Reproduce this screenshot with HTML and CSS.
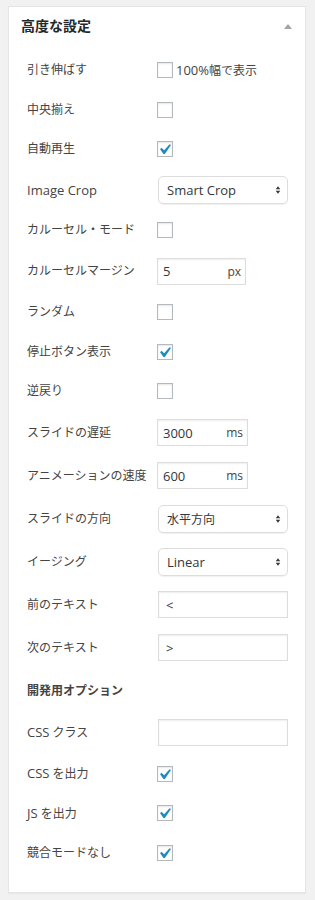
FILE: index.html
```html
<!DOCTYPE html>
<html>
<head>
    <meta charset="utf-8">
    <title>高度な設定</title>
    <link rel="stylesheet" href="styles.css">
</head>
<body>
    <div class="postbox">
        <div class="postbox-header">
            <h2>高度な設定</h2>
            <span class="toggle"></span>
        </div>

        <div class="inside">
            <div class="row">
                <label>引き伸ばす</label>
                <div class="control">
                    <span class="checkbox"></span>
                    <span class="note"><span class="latin">100%</span>幅で表示</span>
                </div>
            </div>
            <div class="row">
                <label>中央揃え</label>
                <div class="control"><span class="checkbox"></span></div>
            </div>
            <div class="row">
                <label>自動再生</label>
                <div class="control">
                    <span class="checkbox checked">
                        <svg viewBox="0 0 20 20"><path d="M14.83 4.89l1.34.94-5.81 8.38H9.02L5.78 9.67l1.34-1.250 2.57 2.4z" /></svg>
                    </span>
                </div>
            </div>
            <div class="row row-select">
                <label class="latin">Image Crop</label>
                <div class="control">
                    <div class="select">
                        <span>Smart Crop</span>
                        <svg viewBox="0 0 8 12"><path d="M4 1 L7 5 L1 5 Z M4 11 L7 7 L1 7 Z" /></svg>
                    </div>
                </div>
            </div>
            <div class="row">
                <label>カルーセル・モード</label>
                <div class="control"><span class="checkbox"></span></div>
            </div>
            <div class="row row-field">
                <label>カルーセルマージン</label>
                <div class="control">
                    <div class="input input-unit"><span>5</span><span class="unit">px</span></div>
                </div>
            </div>
            <div class="row">
                <label>ランダム</label>
                <div class="control"><span class="checkbox"></span></div>
            </div>
            <div class="row">
                <label>停止ボタン表示</label>
                <div class="control">
                    <span class="checkbox checked">
                        <svg viewBox="0 0 20 20"><path d="M14.83 4.89l1.34.94-5.81 8.38H9.02L5.78 9.67l1.34-1.250 2.57 2.4z" /></svg>
                    </span>
                </div>
            </div>
            <div class="row">
                <label>逆戻り</label>
                <div class="control"><span class="checkbox"></span></div>
            </div>
            <div class="row row-field">
                <label>スライドの遅延</label>
                <div class="control">
                    <div class="input input-unit wide"><span>3000</span><span class="unit">ms</span></div>
                </div>
            </div>
            <div class="row row-field">
                <label>アニメーションの速度</label>
                <div class="control">
                    <div class="input input-unit wide"><span>600</span><span class="unit">ms</span></div>
                </div>
            </div>
            <div class="row row-field">
                <label>スライドの方向</label>
                <div class="control">
                    <div class="select">
                        <span class="cjk">水平方向</span>
                        <svg viewBox="0 0 8 12"><path d="M4 1 L7 5 L1 5 Z M4 11 L7 7 L1 7 Z" /></svg>
                    </div>
                </div>
            </div>
            <div class="row row-field">
                <label>イージング</label>
                <div class="control">
                    <div class="select">
                        <span>Linear</span>
                        <svg viewBox="0 0 8 12"><path d="M4 1 L7 5 L1 5 Z M4 11 L7 7 L1 7 Z" /></svg>
                    </div>
                </div>
            </div>
            <div class="row row-field">
                <label>前のテキスト</label>
                <div class="control"><div class="input full">&lt;</div></div>
            </div>
            <div class="row row-field">
                <label>次のテキスト</label>
                <div class="control"><div class="input full">&gt;</div></div>
            </div>
            <div class="row row-heading">
                <h3>開発用オプション</h3>
            </div>
            <div class="row row-field">
                <label><span class="latin">CSS</span> クラス</label>
                <div class="control"><div class="input full"></div></div>
            </div>
            <div class="row">
                <label><span class="latin">CSS</span> を出力</label>
                <div class="control">
                    <span class="checkbox checked">
                        <svg viewBox="0 0 20 20"><path d="M14.83 4.89l1.34.94-5.81 8.38H9.02L5.78 9.67l1.34-1.250 2.57 2.4z" /></svg>
                    </span>
                </div>
            </div>
            <div class="row">
                <label><span class="latin">JS</span> を出力</label>
                <div class="control">
                    <span class="checkbox checked">
                        <svg viewBox="0 0 20 20"><path d="M14.83 4.89l1.34.94-5.81 8.38H9.02L5.78 9.67l1.34-1.250 2.57 2.4z" /></svg>
                    </span>
                </div>
            </div>
            <div class="row">
                <label>競合モードなし</label>
                <div class="control">
                    <span class="checkbox checked">
                        <svg viewBox="0 0 20 20"><path d="M14.83 4.89l1.34.94-5.81 8.38H9.02L5.78 9.67l1.34-1.250 2.57 2.4z" /></svg>
                    </span>
                </div>
            </div>
        </div>
    </div>
</body>
</html>
```

FILE: styles.css
```css
body {
    margin: 0;
    padding: 6px 9px 8px 8px;
    background: #f1f1f1;
    font-family: "Open Sans", "Noto Sans CJK JP", sans-serif;
    font-size: 12px;
    color: #444;
}
.latin {
    font-size: 13px;
}
.postbox {
    background: #fff;
    border: 1px solid #e5e5e5;
    box-shadow: 0 1px 1px rgba(0, 0, 0, 0.04);
}
.postbox-header {
    display: flex;
    align-items: center;
    justify-content: space-between;
    height: 37px;
    padding: 0 13px 0 12px;
}
.postbox-header h2 {
    margin: 0;
    font-size: 14px;
    font-weight: bold;
    color: #23282d;
    line-height: 20px;
}
.toggle {
    width: 0;
    height: 0;
    border-left: 4px solid transparent;
    border-right: 4px solid transparent;
    border-bottom: 5px solid #a0a5aa;
    margin-top: 1px;
}
.inside {
    padding: 6.5px 0 19.5px 18px;
}
.row {
    display: flex;
    align-items: center;
    height: 39.5px;
}
.row-select {
    height: 41px;
}
.row-field {
    height: 43px;
}
.row-heading {
    height: 42px;
}
.row label {
    width: 130px;
    flex: none;
    line-height: 20px;
}
.row h3 {
    margin: 0;
    font-size: 12px;
    font-weight: bold;
    color: #444;
}
.control {
    display: flex;
    align-items: center;
}
.checkbox {
    position: relative;
    box-sizing: border-box;
    width: 16px;
    height: 16px;
    border: 1px solid #b4b9be;
    background: #fff;
    box-shadow: inset 0 1px 2px rgba(0, 0, 0, 0.1);
}
.checkbox svg {
    position: absolute;
    left: -4px;
    top: -3px;
    width: 21px;
    height: 21px;
}
.checkbox path {
    fill: #1e8cbe;
}
.note {
    margin-left: 3px;
    color: #444;
}
.select {
    box-sizing: border-box;
    width: 130px;
    height: 28px;
    margin-left: 1px;
    border: 1px solid #ddd;
    border-radius: 5px;
    box-shadow: 0 1px 1px rgba(0, 0, 0, 0.06);
    display: flex;
    align-items: center;
    justify-content: space-between;
    padding: 0 6px 0 8px;
    color: #32373c;
    font-size: 13px;
}
.select .cjk {
    font-size: 12px;
}
.select svg {
    width: 6px;
    height: 10px;
}
.select path {
    fill: #32373c;
}
.input {
    box-sizing: border-box;
    height: 27px;
    border: 1px solid #ddd;
    box-shadow: inset 0 1px 2px rgba(0, 0, 0, 0.07);
    display: flex;
    align-items: center;
    padding: 0 6px 0 7px;
    color: #32373c;
    font-size: 13px;
}
.input-unit {
    width: 89px;
    justify-content: space-between;
    padding-left: 5px;
    padding-right: 4px;
}
.input-unit.wide {
    width: 91px;
}
.input.full {
    width: 130px;
    margin-left: 1px;
}
.unit {
    color: #444;
    font-size: 12px;
}
```
